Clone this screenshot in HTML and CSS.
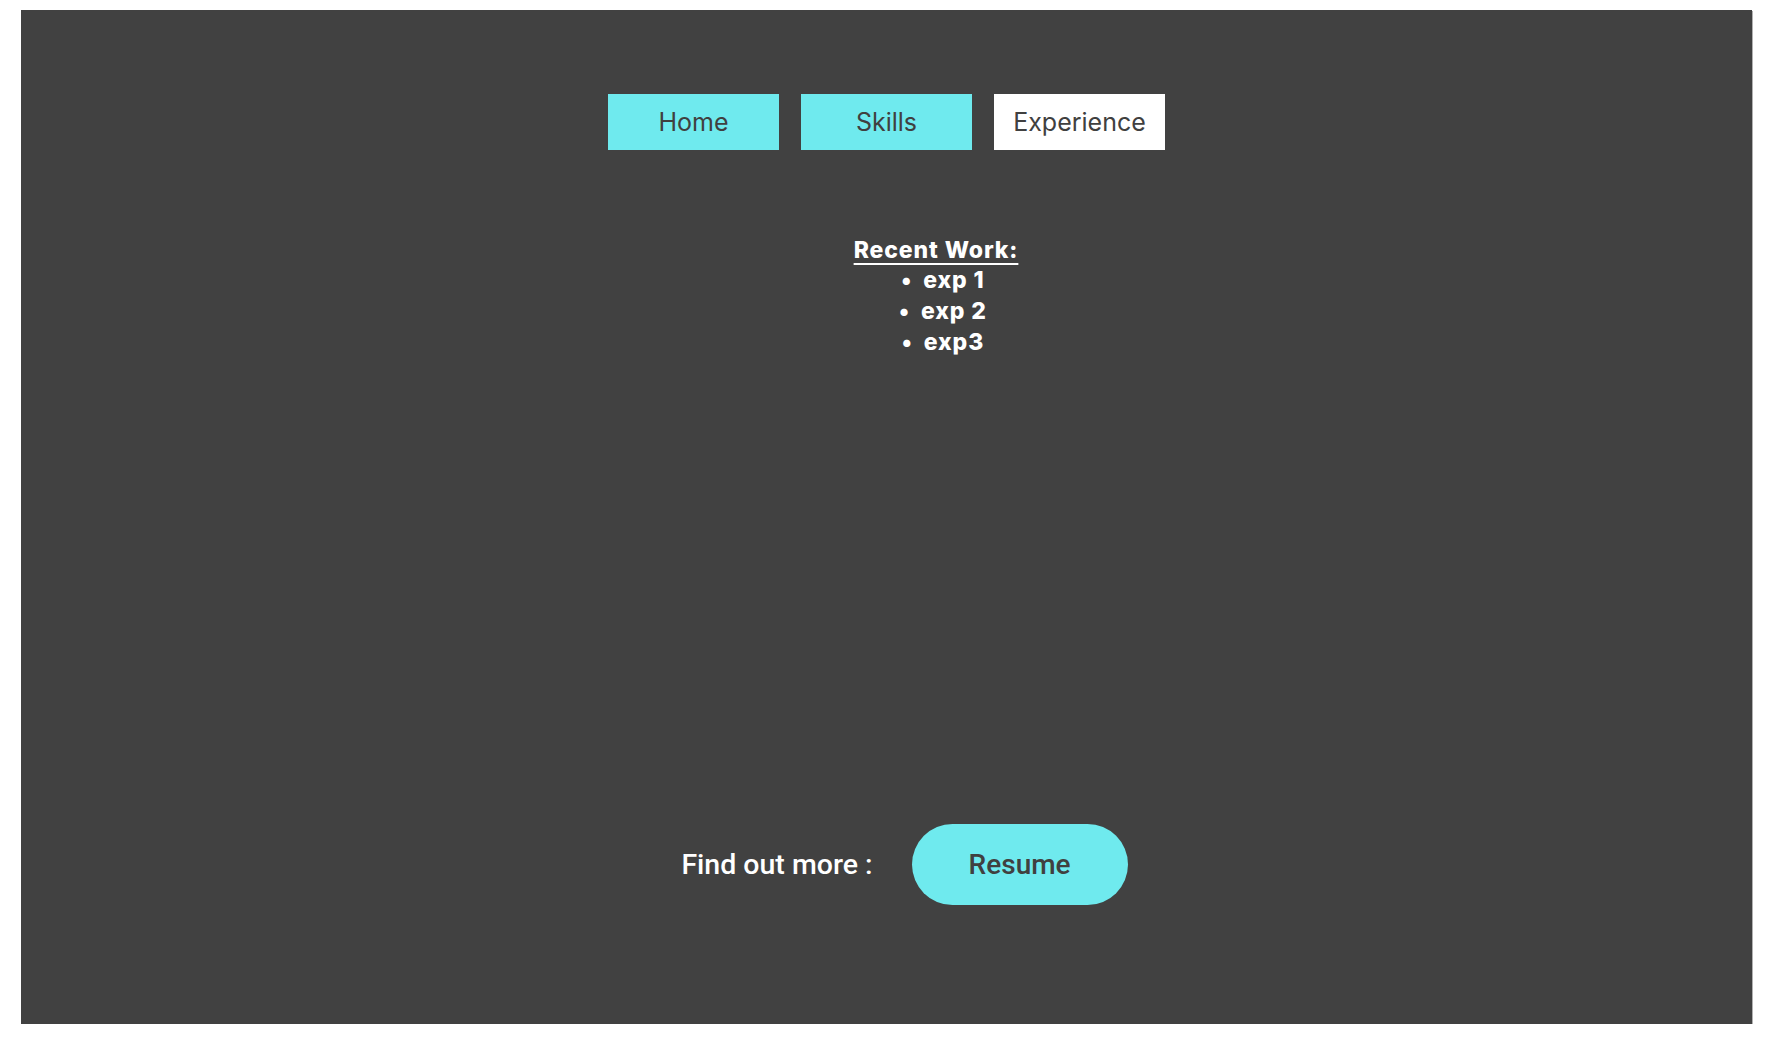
FILE: index.html
```html
<!DOCTYPE html>
<html lang="en">
<head>
<meta charset="utf-8">
<title>Experience</title>
<link rel="stylesheet" href="styles.css">
</head>
<body>
<div class="page">
  <main class="panel">
    <nav class="nav">
      <a class="nav-btn" href="#">Home</a>
      <a class="nav-btn" href="#">Skills</a>
      <a class="nav-btn active" href="#">Experience</a>
    </nav>
    <section class="work">
      <h2 class="work-title">Recent Work:</h2>
      <ul class="work-list">
        <li>exp 1</li>
        <li>exp 2</li>
        <li>exp3</li>
      </ul>
    </section>
    <div class="more">
      <span class="more-label">Find out more :</span>
      <a class="resume-btn" href="#">Resume</a>
    </div>
  </main>
</div>
</body>
</html>
```
FILE: styles.css
```css
html, body {
  margin: 0;
  padding: 0;
  background: #ffffff;
}

.page {
  padding: 10px 0 0 21px;
}

.panel {
  width: 1731px;
  height: 1014px;
  background: #414141;
  box-shadow: 1px 1px 0 #b0b0b0;
  display: flex;
  flex-direction: column;
  align-items: center;
  box-sizing: border-box;
  padding-top: 84px;
}

.nav {
  display: flex;
  gap: 22px;
}

.nav-btn {
  width: 171px;
  height: 56px;
  display: flex;
  align-items: center;
  justify-content: center;
  background: #6feaee;
  color: #404040;
  font-family: Inter, "Liberation Sans", sans-serif;
  font-size: 25px;
  text-decoration: none;
}

.nav-btn.active {
  background: #ffffff;
}

.work {
  margin-top: 85px;
  padding-left: 99px;
  display: flex;
  flex-direction: column;
  align-items: center;
  font-family: Inter, "Liberation Sans", sans-serif;
  font-weight: 800;
  font-size: 23px;
  letter-spacing: 0.9px;
  color: #ffffff;
}

.work-title {
  margin: 0;
  font-size: 23px;
  font-weight: 800;
  line-height: 30px;
  text-decoration: underline;
  text-decoration-thickness: 2px;
  text-underline-offset: 5px;
}

.work-list {
  margin: 0;
  padding: 0 0 0 14px;
  list-style: none;
  text-align: center;
  line-height: 31px;
}

.work-list li::before {
  content: "\2022";
  margin-right: 11px;
}

.more {
  margin-top: 466px;
  padding-left: 36px;
  display: flex;
  align-items: center;
  gap: 39px;
  font-family: Roboto, "Liberation Sans", sans-serif;
}

.more-label {
  color: #ffffff;
  font-size: 28.5px;
  font-weight: 500;
}

.resume-btn {
  width: 216px;
  height: 81px;
  border-radius: 41px;
  background: #6feaee;
  color: #404040;
  font-size: 28px;
  font-weight: 500;
  display: flex;
  align-items: center;
  justify-content: center;
  text-decoration: none;
}
```
